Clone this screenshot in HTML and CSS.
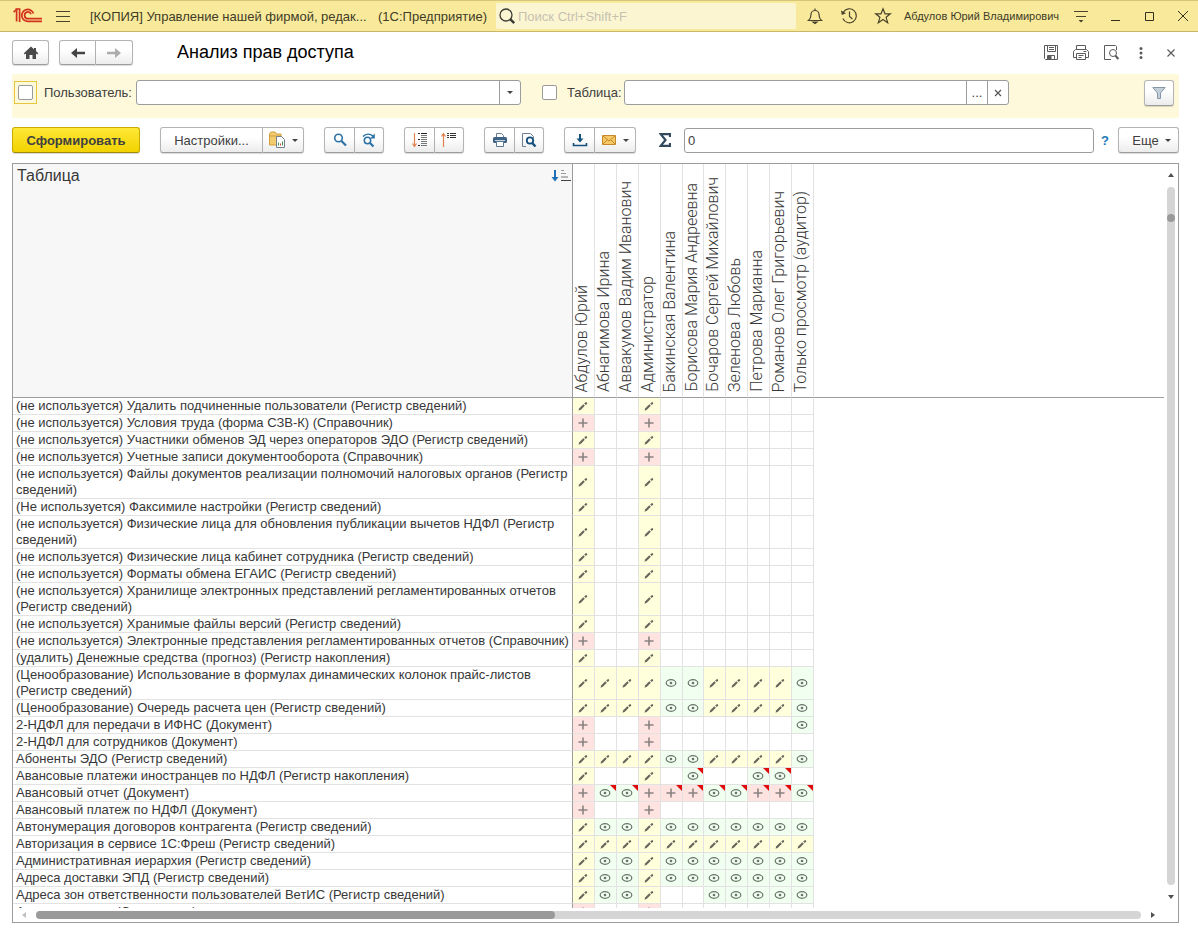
FILE: index.html
```html
<!DOCTYPE html>
<html lang="ru">
<head>
    <meta charset="UTF-8">
    <meta name="viewport" content="width=device-width, initial-scale=1.0">
    <title>Анализ прав доступа</title>
    <link rel="stylesheet" href="styles.css">
</head>
<body>
    <!-- Cell icons, reused by script.js -->
    <svg class="sprite" aria-hidden="true">
        <symbol id="i-edit" viewBox="0 0 12 12"><path d="M1.500 10.700l.8-2.500 4-3.900 1.500 1.500-3.900 4z" fill="#66665c"/><path d="M7.200 3.500l1.200-1.100a1.050 1.050 0 0 1 1.500 1.500l-1.200 1.100z" fill="#66665c"/></symbol>
        <symbol id="i-plus" viewBox="0 0 12 12"><path d="M6 1.500v9M1.500 6h9" stroke="#8a8282" stroke-width="1.600"/></symbol>
        <symbol id="i-view" viewBox="0 0 12 12"><ellipse cx="6" cy="6" rx="4.800" ry="3.300" fill="none" stroke="#6a746a" stroke-width="1.200"/><circle cx="6" cy="6" r="1.300" fill="#6a746a"/></symbol>
    </svg>

    <header class="titlebar">
        <svg class="logo" width="30" height="16" viewBox="0 0 30 16" fill="none" stroke="#d2321e" stroke-width="1.700">
            <path d="M.5 4.200L3.600 1.600V13.500M2.400 1H6.600V14"/>
            <path d="M20.500 5.600A6 6 0 1 0 15.300 13.400H29"/>
            <path d="M18 6.200A3.300 3.300 0 1 0 15.300 10.600H29"/>
        </svg>
        <button class="bar-btn" aria-label="Меню"><svg width="16" height="16" viewBox="0 0 16 16" stroke="#4a442c" stroke-width="1.200"><path d="M1 3.500h14M1 8.500h14M1 13.500h14"/></svg></button>
        <span class="app-name">[КОПИЯ] Управление нашей фирмой, редак...</span>
        <span class="app-kind">(1С:Предприятие)</span>
        <label class="search">
            <svg width="18" height="18" viewBox="0 0 18 18" fill="none" stroke="#3c3c34"><circle cx="8" cy="8" r="6" stroke-width="1.300"/><path d="M12.200 12.200l4 4" stroke-width="2.400"/></svg>
            <input type="text" placeholder="Поиск Ctrl+Shift+F" aria-label="Поиск">
        </label>
        <div class="bar-icons">
            <button class="bar-btn" aria-label="Уведомления"><svg width="18" height="18" viewBox="0 0 18 18" fill="none" stroke="#4a442c" stroke-width="1.200"><path d="M2.500 13.500c2-1.700 2.500-3.500 2.500-6a4 4 0 0 1 8 0c0 2.500.5 4.300 2.500 6zM9 3.500V1.500"/><path d="M7 15h4l-2 1.500z" fill="#4a442c"/></svg></button>
            <button class="bar-btn" aria-label="История"><svg width="18" height="18" viewBox="0 0 18 18" fill="none" stroke="#4a442c" stroke-width="1.200"><path d="M3.300 5.200A7 7 0 1 1 2.900 11.500"/><path d="M9.500 4.500v5l3 2.500"/><path d="M1 3.500l.8 4.500 4.200-1.800z" fill="#4a442c" stroke="none"/></svg></button>
            <button class="bar-btn" aria-label="Избранное"><svg width="18" height="18" viewBox="0 0 18 18" fill="none" stroke="#4a442c" stroke-width="1.200"><path d="M9 1.800l2 5h5.300l-4.200 3.500 1.600 5.500L9 12.600l-4.700 3.200 1.600-5.500L1.700 6.800H7z"/></svg></button>
        </div>
        <span class="user">Абдулов Юрий Владимирович</span>
        <div class="window-icons">
            <button class="bar-btn" aria-label="Настройка"><svg width="16" height="16" viewBox="0 0 16 16" stroke="#4a442c" stroke-width="1.200"><path d="M1 3.500h14M3 8.500h10"/><path d="M5.500 12h5L8 14.500z" fill="#4a442c" stroke="none"/></svg></button>
            <button class="bar-btn" aria-label="Свернуть"><svg width="16" height="16" viewBox="0 0 16 16" stroke="#33301f"><path d="M4 12.500h9"/></svg></button>
            <button class="bar-btn" aria-label="Развернуть"><svg width="16" height="16" viewBox="0 0 16 16" fill="none" stroke="#33301f"><path d="M4.500 4.500h8v8h-8z"/></svg></button>
            <button class="bar-btn" aria-label="Закрыть"><svg width="16" height="16" viewBox="0 0 16 16" stroke="#33301f"><path d="M3 3l10 10M13 3L3 13"/></svg></button>
        </div>
    </header>

    <main class="page">
        <div class="heading">
            <button class="btn home" aria-label="Начальная страница"><svg width="16" height="14" viewBox="0 0 16 14" fill="#4a4a4a"><path d="M8 .5L.8 7.200l.9 1.200L3 7.400V13h3.500V9h3v4H13V7.400l1.300 1 .9-1.200L13 5V2h-2v1.300z"/></svg></button>
            <div class="group nav">
                <button class="btn" aria-label="Назад"><svg width="16" height="12" viewBox="0 0 16 12"><path d="M1 6l6-5v3.800h8v2.400H7V11z" fill="#444"/></svg></button>
                <button class="btn" aria-label="Вперед"><svg width="16" height="12" viewBox="0 0 16 12"><path d="M15 6L9 1v3.800H1v2.400h8V11z" fill="#adadad"/></svg></button>
            </div>
            <h1>Анализ прав доступа</h1>
            <div class="page-icons">
                <button class="bar-btn" aria-label="Сохранить"><svg width="16" height="16" viewBox="0 0 16 16" fill="none" stroke="#5c5c5c"><path d="M1.500.5h13v14h-12l-1-1zM4.500.5v6h8v-6M6 2.500h5M6 4.500h5M4.500 14.500v-4h7v4"/><path d="M5 11h3v3H5z" fill="#5c5c5c"/></svg></button>
                <button class="bar-btn" aria-label="Печать"><svg width="16" height="16" viewBox="0 0 16 16" fill="none" stroke="#5c5c5c"><path d="M3.500 4.500v-4h9v4M3.500 12.500h-3v-6l2-2h11l2 2v6h-3M3.500 8.500h9v6h-9zM5.500 10.500h5M5.500 12.500h3M10.500 6.500h3"/></svg></button>
                <button class="bar-btn" aria-label="Просмотр"><svg width="16" height="16" viewBox="0 0 16 16" fill="none" stroke="#5c5c5c"><path d="M8 14.500H1.500V.5h11l1 1V5"/><circle cx="10" cy="8" r="3.500"/><path d="M12.300 10.500l3 3.500" stroke-width="2"/></svg></button>
                <button class="bar-btn" aria-label="Еще"><svg width="16" height="16" viewBox="0 0 16 16" fill="#5c5c5c"><circle cx="8" cy="3.500" r="1.500"/><circle cx="8" cy="8" r="1.500"/><circle cx="8" cy="12.500" r="1.500"/></svg></button>
                <button class="bar-btn" aria-label="Закрыть страницу"><svg width="16" height="16" viewBox="0 0 16 16" stroke="#5c5c5c" stroke-width="1.200"><path d="M4.500 4.500l7 7M11.500 4.500l-7 7"/></svg></button>
            </div>
        </div>

        <div class="filters">
            <span class="check focused"><input type="checkbox" id="use-user" aria-label="Отбор по пользователю"></span>
            <label class="user-label" for="user">Пользователь:</label>
            <div class="field drop">
                <select id="user"><option></option></select>
                <span class="field-arrow"><i class="caret"></i></span>
            </div>
            <span class="check"><input type="checkbox" id="use-table" aria-label="Отбор по таблице"></span>
            <label class="table-label" for="table">Таблица:</label>
            <div class="field">
                <input type="text" id="table">
                <button aria-label="Выбрать">...</button>
                <button aria-label="Очистить"><svg width="8" height="8" viewBox="0 0 8 8" stroke="#555" stroke-width="1.200"><path d="M1 1l6 6M7 1L1 7"/></svg></button>
            </div>
            <button class="btn funnel" aria-label="Фильтр"><svg width="14" height="14" viewBox="0 0 14 14"><path d="M.8 1.500h12.400L8.500 7v5.500h-3V7z" fill="#c3d0da" stroke="#8597a6"/></svg></button>
        </div>

        <div class="toolbar">
            <button class="btn primary">Сформировать</button>
            <div class="group">
                <button class="btn settings">Настройки...</button>
                <button class="btn wide" aria-label="Варианты отчета"><svg width="18" height="18" viewBox="0 0 18 18"><path d="M1.500 14V3l1.500-2h4l1.500 2H13v11z" fill="#f3cc6e" stroke="#cf9f3c"/><path d="M1.500 5H13" stroke="#cf9f3c"/><path d="M8.500 5.500h5l3 3v8h-8z" fill="#fff" stroke="#74808a"/><path d="M10.500 14.500v-3M14.500 14.500v-4" stroke="#3a9a4a"/><path d="M12.500 14.500v-2" stroke="#d83a3a"/></svg><i class="caret"></i></button>
            </div>
            <div class="group">
                <button class="btn icon" aria-label="Найти"><svg width="16" height="16" viewBox="0 0 16 16" fill="none" stroke="#2d72a6"><circle cx="6.500" cy="6" r="3.800" stroke-width="1.600"/><path d="M9.500 9l4.500 4.500" stroke-width="2.200"/></svg></button>
                <button class="btn icon" aria-label="Найти далее"><svg width="16" height="16" viewBox="0 0 16 16" fill="none" stroke="#2d72a6"><circle cx="6.500" cy="8.500" r="3.200" stroke-width="1.500"/><path d="M9 11l3.500 3.500" stroke-width="2.200"/><path d="M2 4.500C5 1.500 9 1.500 12 4" stroke-width="1.500"/><path d="M13.800 1.500v5H9z" fill="#2d72a6" stroke="none"/></svg></button>
            </div>
            <div class="group">
                <button class="btn icon" aria-label="Развернуть группы"><svg width="16" height="16" viewBox="0 0 16 16" fill="none"><path d="M2.500 1v13M.5 11.500l2 3 2-3" stroke="#e2834f" stroke-width="1.200"/><path d="M6 1.500h2M9 1.500h6M6 7.500h2M6 13.500h2" stroke="#222"/><path d="M9 3.500h6M9 5.500h6M9 7.500h6M9 9.500h6M9 11.500h6M9 13.500h6" stroke="#777"/></svg></button>
                <button class="btn icon" aria-label="Свернуть группы"><svg width="16" height="16" viewBox="0 0 16 16" fill="none"><path d="M2.500 15V1.500M.5 4.500l2-3 2 3" stroke="#e2834f" stroke-width="1.200"/><path d="M6 1.500h2M9 1.500h6M6 3.500h2M9 3.500h6M6 5.500h2M9 5.500h6" stroke="#333"/></svg></button>
            </div>
            <div class="group">
                <button class="btn icon" aria-label="Печать отчета"><svg width="16" height="16" viewBox="0 0 16 16"><path d="M4.500 5V1.500h5l2 2V5" fill="#fff" stroke="#6b7f90"/><rect x="1" y="5" width="14" height="6" rx="1.500" fill="#3e6384"/><path d="M3 8.500h10" stroke="#c4d3df"/><path d="M4.500 9.500h7v5h-7z" fill="#fff" stroke="#5d7890"/></svg></button>
                <button class="btn icon" aria-label="Предварительный просмотр"><svg width="16" height="16" viewBox="0 0 16 16" fill="none"><path d="M5 14.500H1.500V1.500h8l3 3V6" stroke="#6b7f90"/><circle cx="9" cy="8.500" r="3.200" stroke="#14507c" stroke-width="1.800"/><path d="M11.200 11l3.300 3.500" stroke="#14507c" stroke-width="2.400"/></svg></button>
            </div>
            <div class="group">
                <button class="btn icon" aria-label="Сохранить в файл"><svg width="16" height="16" viewBox="0 0 16 16" fill="none" stroke="#14507c"><path d="M8 2v5" stroke-width="2"/><path d="M4.500 6.500h7L8 10.500z" fill="#14507c" stroke="none"/><path d="M1.500 11v2.500h13V11" stroke-width="1.600"/></svg></button>
                <button class="btn wide" aria-label="Отправить"><svg width="16" height="16" viewBox="0 0 16 16"><path d="M1.500 3.500h13v9h-13z" fill="#f5c966" stroke="#c48a2a"/><path d="M2 4l6 5 6-5M2 12l4.500-4.500M14 12L9.500 7.500" fill="none" stroke="#c48a2a"/></svg><i class="caret"></i></button>
            </div>
            <div class="sum">
                <label for="sum" aria-label="Сумма"><svg width="12" height="14" viewBox="0 0 12 14"><path d="M11 4V1.200H1.700L6.500 7l-4.800 5.800H11V10" fill="none" stroke="#34495e" stroke-width="2.200"/></svg></label>
                <input type="text" id="sum" value="0">
                <a href="#">?</a>
            </div>
            <button class="btn more">Еще <i class="caret"></i></button>
        </div>

        <section class="report">
            <div class="sheet">
                <table>
                    <colgroup>
                        <col class="col-name">
                        <col class="col-user" span="5">
                        <col class="col-narrow">
                        <col class="col-user" span="5">
                        <col>
                    </colgroup>
                    <thead>
                        <tr id="head">
                            <th class="corner">
                                <div class="corner-inner">
                                    <span>Таблица</span>
                                    <svg width="20" height="14" viewBox="0 0 20 14"><path d="M3 1h2v7h2.500L4 12.500.5 8H3z" fill="#1f6fb2"/><path d="M10 1.500h3M10 4.500h5" stroke="#999"/><path d="M10 8h7" stroke="#777"/><path d="M10 11.500h10" stroke="#444"/></svg>
                                </div>
                            </th>
                        </tr>
                    </thead>
                    <tbody id="rows"></tbody>
                </table>
            </div>
            <div class="vscroll"><i class="arrow up"></i><div class="track"><div class="thumb"></div></div><i class="arrow down"></i></div>
            <div class="hscroll"><i class="arrow left"></i><div class="track"><div class="thumb"></div></div><i class="arrow right"></i></div>
        </section>
    </main>
    <script src="script.js"></script>
</body>
</html>
```
FILE: styles.css
```css
* {
    box-sizing: border-box;
}

body {
    display: flex;
    flex-direction: column;
    height: 100vh;
    margin: 0;
    background: #fff;
    color: #404040;
    font-family: "Liberation Sans", Arial, sans-serif;
    font-size: 13px;
}

button,
input,
select {
    font: inherit;
    color: inherit;
}

svg {
    display: block;
    flex: none;
}

.sprite {
    position: absolute;
    width: 0;
    height: 0;
}

/* Title bar */
.titlebar {
    display: flex;
    align-items: center;
    height: 32px;
    flex: none;
    padding: 0 7px 0 13px;
    background: #f9ea9b;
    border-top: 1px solid #d5c67c;
    border-bottom: 1px solid #c9b866;
}

.bar-btn {
    display: flex;
    padding: 0;
    border: none;
    background: none;
    cursor: pointer;
}

.titlebar > .bar-btn {
    margin: 0 19px 0 12px;
}

.app-name,
.app-kind {
    flex: none;
    white-space: nowrap;
    color: #403c28;
}

.app-name {
    width: 288px;
}

.app-kind {
    width: 118px;
}

.search {
    display: flex;
    align-items: center;
    flex: 1;
    height: 26px;
    padding-left: 2px;
    background: #fcf5d2;
    border-radius: 2px;
}

.search input {
    flex: 1;
    min-width: 0;
    padding: 0 2px;
    border: none;
    background: none;
    outline: none;
}

.search input::placeholder {
    color: #c6c2b0;
}

.bar-icons {
    display: flex;
    gap: 16px;
    margin: 0 12px 0 10px;
}

.user {
    width: 158px;
    white-space: nowrap;
    font-size: 11px;
    color: #403c28;
}

.window-icons {
    display: flex;
    gap: 18px;
    margin-left: 11px;
}

/* Page */
.page {
    display: flex;
    flex-direction: column;
    flex: 1;
    min-height: 0;
    padding: 8px 19px 12px 12px;
}

.btn {
    display: flex;
    align-items: center;
    justify-content: center;
    height: 26px;
    padding: 0;
    background: linear-gradient(#fff 40%, #ececec);
    border: 1px solid #b4b4b4;
    border-bottom-color: #9c9c9c;
    border-radius: 3px;
    box-shadow: 0 1px 1px rgba(0, 0, 0, 0.15);
    cursor: pointer;
}

.group {
    display: flex;
}

.group .btn:first-child {
    border-radius: 3px 0 0 3px;
}

.group .btn:last-child {
    border-left: none;
    border-radius: 0 3px 3px 0;
}

.caret {
    width: 0;
    height: 0;
    border: 3px solid transparent;
    border-top-color: #444;
    border-bottom: none;
}

.heading {
    display: flex;
    align-items: center;
    height: 25px;
    flex: none;
}

.heading .btn {
    width: 37px;
    height: 25px;
}

.nav {
    margin-left: 10px;
}

h1 {
    flex: 1;
    margin: 0 0 0 44px;
    font-size: 18px;
    font-weight: normal;
    color: #000;
}

.page-icons {
    display: flex;
    gap: 14px;
}

/* Filters */
.filters {
    display: flex;
    align-items: center;
    flex: none;
    height: 44px;
    margin-top: 9px;
    padding: 0 5px 7px 2px;
    background: #fef9db;
}

.check {
    display: flex;
    align-items: center;
    justify-content: center;
    width: 23px;
    height: 23px;
    flex: none;
}

.check.focused {
    border: 1px solid #e6c63c;
}

.check input {
    appearance: none;
    width: 15px;
    height: 15px;
    margin: 0;
    background: #fff;
    border: 1px solid #9a9a9a;
    border-radius: 2px;
}

.user-label {
    flex: none;
    width: 92px;
    margin-left: 7px;
}

.table-label {
    flex: none;
    width: 57px;
    margin-left: 6px;
}

.field {
    display: flex;
    flex: 1;
    min-width: 0;
    max-width: 385px;
    height: 25px;
    background: #fff;
    border: 1px solid #9c9c9c;
    border-radius: 3px;
    overflow: hidden;
}

.field input,
.field select {
    flex: 1;
    min-width: 0;
    padding: 0 4px;
    border: none;
    background: none;
    outline: none;
    appearance: none;
}

.field button,
.field-arrow {
    display: flex;
    align-items: center;
    justify-content: center;
    width: 21px;
    padding: 0;
    border: none;
    border-left: 1px solid #9c9c9c;
    background: none;
}

.drop {
    margin-right: 17px;
}

.funnel {
    width: 30px;
    margin-left: auto;
}

/* Toolbar */
.toolbar {
    display: flex;
    gap: 20px;
    flex: none;
    margin: 9px 0 10px;
}

.primary {
    width: 128px;
    background: linear-gradient(#ffe838, #f2d200);
    border-color: #c8ab00;
    border-bottom-color: #a08900;
    font-weight: bold;
}

.settings {
    width: 103px;
}

.wide {
    width: 41px;
    gap: 6px;
}

.icon {
    width: 30px;
}

.icon:first-child {
    width: 31px;
}

.icon:last-child {
    width: 29px;
}

.sum {
    display: flex;
    align-items: center;
    flex: 1;
    margin: 0 -10px 0 3px;
}

.sum input {
    flex: 1;
    min-width: 0;
    height: 25px;
    margin: 0 7px 0 13px;
    padding: 0 3px;
    border: 1px solid #9c9c9c;
    border-radius: 3px;
}

.sum a {
    width: 7px;
    color: #1e79b4;
    text-decoration: none;
    font-size: 13px;
    font-weight: bold;
}

.more {
    width: 61px;
    gap: 6px;
    padding-left: 6px;
}

/* Report */
.report {
    display: grid;
    grid-template-columns: 1fr 14px;
    grid-template-rows: 1fr 14px;
    flex: 1;
    min-height: 0;
    border: 1px solid #9c9c9c;
}

.sheet {
    min-height: 0;
    overflow: hidden;
}

table {
    width: 100%;
    table-layout: fixed;
    border-collapse: separate;
    border-spacing: 0;
    color: #383838;
}

.col-name {
    width: 560px;
}

.col-user {
    width: 22px;
}

.col-narrow {
    width: 21px;
}

th {
    height: 234px;
    padding: 0;
    border-bottom: 1px solid #9c9c9c;
    font-size: 16px;
    font-weight: normal;
    text-align: left;
    vertical-align: bottom;
}

.corner {
    background: #f7f7f7;
    border-right: 1px solid #9c9c9c;
    vertical-align: top;
}

.corner-inner {
    display: flex;
    align-items: center;
    justify-content: space-between;
    padding: 3px 1px 0 4px;
}

.person {
    border-right: 1px solid #e2e2e2;
}

.person span {
    display: block;
    width: 20px;
    padding-top: 5px;
    font-family: Roboto, "Liberation Sans", sans-serif;
    font-weight: 300;
    line-height: 18px;
    writing-mode: vertical-rl;
    transform: rotate(180deg);
    white-space: nowrap;
}

.name {
    padding: 0 3px;
    border-right: 1px solid #9c9c9c;
    border-bottom: 1px solid #e2e2e2;
    line-height: 16px;
}

.cell {
    position: relative;
    padding: 0;
    border-right: 1px solid #e2e2e2;
    border-bottom: 1px solid #e2e2e2;
}

.cell svg {
    width: 12px;
    height: 12px;
    margin: 0 4px;
}

.edit {
    background: #ffffdc;
}

.plus {
    background: #ffe3e1;
}

.view {
    background: #f0fff0;
}

/* Red corner: the right is restricted */
.limited::after {
    content: "";
    position: absolute;
    top: 0;
    right: 0;
    border-top: 6px solid #e00b0b;
    border-left: 6px solid transparent;
}

/* Scrollbars */
.vscroll,
.hscroll {
    display: flex;
    align-items: center;
}

.vscroll {
    flex-direction: column;
    padding: 9px 0;
}

.hscroll {
    padding: 0 9px;
}

.track {
    flex: 1;
    background: #d5d5d5;
    border-radius: 4px;
}

.vscroll .track {
    width: 8px;
    margin: 10px 0;
    padding-top: 27px;
}

.hscroll .track {
    height: 8px;
    margin: 0 10px;
}

.thumb {
    height: 8px;
    background: #9a9a9a;
    border-radius: 4px;
}

.hscroll .thumb {
    width: 47%;
}

.arrow {
    border: 3px solid transparent;
}

.up {
    border-top: none;
    border-bottom: 4px solid #505050;
}

.down {
    border-bottom: none;
    border-top: 4px solid #505050;
}

.left {
    border-left: none;
    border-right: 4px solid #c0c0c0;
}

.right {
    border-right: none;
    border-left: 4px solid #505050;
}
```
FILE: script.js
```js
const people = [
    'Абдулов Юрий', 'Абнагимова Ирина', 'Аввакумов Вадим Иванович', 'Администратор',
    'Бакинская Валентина', 'Борисова Мария Андреевна', 'Бочаров Сергей Михайлович',
    'Зеленова Любовь', 'Петрова Марианна', 'Романов Олег Григорьевич', 'Только просмотр (аудитор)'
];

// e - edit, p - add, v - view, capital letter - restricted, dot - no access
const rights = [
    ['(не используется) Удалить подчиненные пользователи (Регистр сведений)', 'e..e.......'],
    ['(не используется) Условия труда (форма СЗВ-К) (Справочник)', 'p..p.......'],
    ['(не используется) Участники обменов ЭД через операторов ЭДО (Регистр сведений)', 'e..e.......'],
    ['(не используется) Учетные записи документооборота (Справочник)', 'p..p.......'],
    ['(не используется) Файлы документов реализации полномочий налоговых органов (Регистр сведений)', 'e..e.......'],
    ['(Не используется) Факсимиле настройки (Регистр сведений)', 'e..e.......'],
    ['(не используется) Физические лица для обновления публикации вычетов НДФЛ (Регистр сведений)', 'e..e.......'],
    ['(не используется) Физические лица кабинет сотрудника (Регистр сведений)', 'e..e.......'],
    ['(не используется) Форматы обмена ЕГАИС (Регистр сведений)', 'e..e.......'],
    ['(не используется) Хранилище электронных представлений регламентированных отчетов (Регистр сведений)', 'e..e.......'],
    ['(не используется) Хранимые файлы версий (Регистр сведений)', 'e..e.......'],
    ['(не используется) Электронные представления регламентированных отчетов (Справочник)', 'p..p.......'],
    ['(удалить) Денежные средства (прогноз) (Регистр накопления)', 'e..e.......'],
    ['(Ценообразование) Использование в формулах динамических колонок прайс-листов (Регистр сведений)', 'eeeevveeeev'],
    ['(Ценообразование) Очередь расчета цен (Регистр сведений)', 'eeeevveeeev'],
    ['2-НДФЛ для передачи в ИФНС (Документ)', 'p..p......v'],
    ['2-НДФЛ для сотрудников (Документ)', 'p..p.......'],
    ['Абоненты ЭДО (Регистр сведений)', 'eeeevveeeev'],
    ['Авансовые платежи иностранцев по НДФЛ (Регистр накопления)', 'e..e.V..VV.'],
    ['Авансовый отчет (Документ)', 'pVVpPPVVPPV'],
    ['Авансовый платеж по НДФЛ (Документ)', 'p..p.......'],
    ['Автонумерация договоров контрагента (Регистр сведений)', 'evvevvvvvvv'],
    ['Авторизация в сервисе 1С:Фреш (Регистр сведений)', 'eeeeeeeeeee'],
    ['Административная иерархия (Регистр сведений)', 'evvevvvvvvv'],
    ['Адреса доставки ЭПД (Регистр сведений)', 'evvevvvvvvv'],
    ['Адреса зон ответственности пользователей ВетИС (Регистр сведений)', 'evve..vvvvv'],
    ['Адресные книги (Справочник)', 'p..p.......']
];

const kinds = { e: 'edit', p: 'plus', v: 'view' };

function cell(code) {
    const kind = kinds[code.toLowerCase()];
    if (!kind) return '<td class="cell"></td>';
    const limited = code !== code.toLowerCase() ? ' limited' : '';
    return `<td class="cell ${kind}${limited}"><svg><use href="#i-${kind}"/></svg></td>`;
}

document.getElementById('head').insertAdjacentHTML('beforeend',
    people.map(p => `<th class="person"><span>${p}</span></th>`).join('') + '<th></th>');

document.getElementById('rows').innerHTML = rights.map(([name, codes]) =>
    `<tr><td class="name">${name}</td>${[...codes].map(cell).join('')}<td></td></tr>`).join('');
```
